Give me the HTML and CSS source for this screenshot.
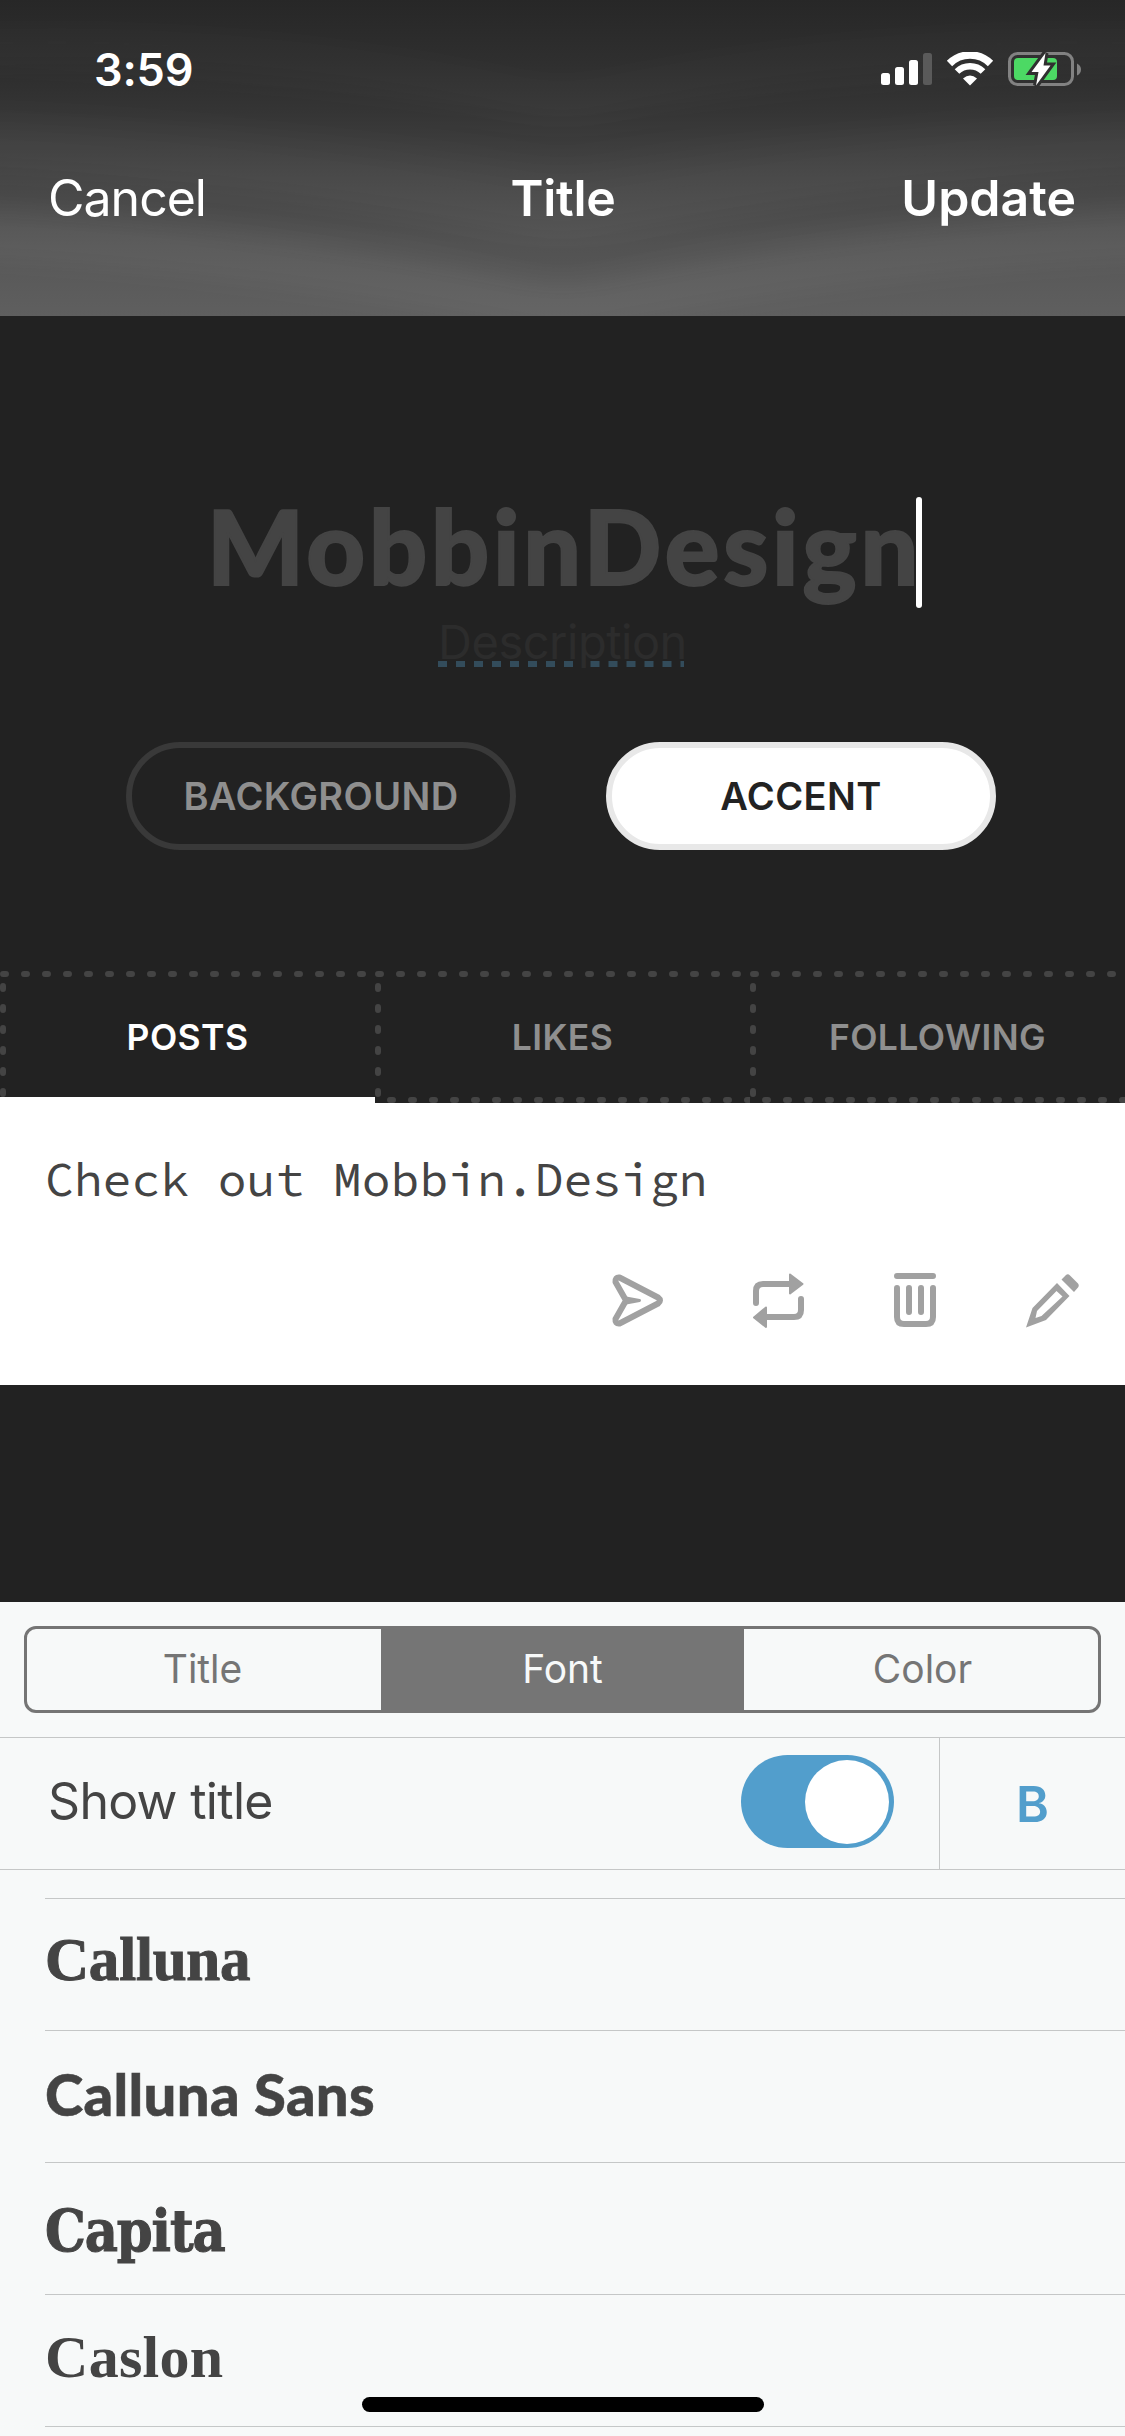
FILE: index.html
```html
<!DOCTYPE html>
<html lang="en">
<head>
<meta charset="utf-8">
<title>Title</title>
<link rel="stylesheet" href="styles.css">
</head>
<body>
<div class="screen">
  <header class="header">
    <svg class="header-bg" viewBox="0 0 1125 316" preserveAspectRatio="none" aria-hidden="true">
      <defs>
        <linearGradient id="hg" x1="0" y1="0" x2="0" y2="1">
          <stop offset="0" stop-color="#272727"/><stop offset=".2" stop-color="#2f2f2f"/>
          <stop offset=".36" stop-color="#383838"/><stop offset=".55" stop-color="#474747"/>
          <stop offset=".78" stop-color="#565656"/><stop offset="1" stop-color="#5f5f5f"/>
        </linearGradient>
        <filter id="soft" x="-20%" y="-50%" width="140%" height="200%" color-interpolation-filters="sRGB"><feGaussianBlur stdDeviation="30 12"/></filter>
      </defs>
      <rect width="1125" height="316" fill="url(#hg)"/>
      <g fill="none" filter="url(#soft)">
        <path d="M-60 45Q250 30 562 100Q875 30 1185 45" stroke="#fff" stroke-opacity=".015" stroke-width="36"/>
        <path d="M-60 85Q300 100 562 145Q825 100 1185 85" stroke="#000" stroke-opacity=".07" stroke-width="26"/>
        <path d="M-60 145Q250 160 562 215Q875 160 1185 145" stroke="#fff" stroke-opacity=".015" stroke-width="46"/>
        <path d="M-60 180Q300 200 562 262Q825 200 1185 180" stroke="#000" stroke-opacity=".05" stroke-width="28"/>
        <path d="M-60 235Q260 250 562 312Q865 250 1185 235" stroke="#fff" stroke-opacity=".045" stroke-width="44"/>
      </g>
    </svg>
    <div class="status">
      <span class="time">3:59</span>
      <svg class="status-icons" width="204" height="36" viewBox="0 0 204 36" aria-hidden="true">
        <g fill="#fff">
          <rect x="1" y="21" width="9" height="12" rx="2.5"/>
          <rect x="15" y="15" width="9" height="18" rx="2.5"/>
          <rect x="29" y="8" width="9" height="25" rx="2.5"/>
          <rect x="43" y="1" width="9" height="32" rx="2.5" fill="#5a5a5a"/>
        </g>
        <g fill="none" stroke="#fff">
          <path d="M69.500 11.500A29 29 0 0 1 110.500 11.500" stroke-width="7.500"/>
          <path d="M77 19.500A18.500 18.500 0 0 1 103 19.500" stroke-width="6.500"/>
        </g>
        <path d="M83 26.500Q90 20.500 97 26.500L90 33.500Z" fill="#fff"/>
        <rect x="129.500" y="1.500" width="63" height="31" rx="8" fill="none" stroke="#828282" stroke-width="3"/>
        <path d="M197 11.500Q201 13.500 201 17.500T197 23.500Z" fill="#828282"/>
        <rect x="134" y="6" width="43" height="22" rx="4" fill="#4cd964"/>
        <path d="M165.500 1L151.500 20H158.500L156 33.500L170.500 13.500H163.500Z" fill="#fff" stroke="#303030" stroke-width="6" paint-order="stroke"/>
      </svg>
    </div>
    <nav class="nav">
      <span class="nav-cancel">Cancel</span>
      <span class="nav-title">Title</span>
      <span class="nav-update">Update</span>
    </nav>
  </header>

  <main class="preview">
    <div class="blog-title"><span class="blog-name">MobbinDesign</span><i class="caret"></i></div>
    <div class="description"><span>Description</span>
      <svg class="dots" width="246" height="6" viewBox="0 0 246 6" aria-hidden="true"><path d="M0 3H137M152.500 3H246" stroke="#334c5b" stroke-width="6" stroke-dasharray="9 9"/></svg>
    </div>
    <div class="pills">
      <div class="pill">BACKGROUND</div>
      <div class="pill pill-on">ACCENT</div>
    </div>
    <div class="tabs">
      <div class="tab tab-on">POSTS
        <svg class="tab-edge" width="375" height="132" viewBox="0 0 375 132"><path d="M3 3H375M3 15V126"/></svg></div>
      <div class="tab">LIKES
        <svg class="tab-edge" width="375" height="132" viewBox="0 0 375 132"><path d="M3 3H375M3 15V132M15 129H375"/></svg></div>
      <div class="tab">FOLLOWING
        <svg class="tab-edge" width="375" height="132" viewBox="0 0 375 132"><path d="M3 3H375M3 15V132M15 129H375"/></svg></div>
    </div>
    <article class="post">
      <p class="post-text">Check out Mobbin.Design</p>
      <div class="actions">
        <svg width="51" height="56" viewBox="0 0 51 56" fill="none" stroke="#a1a1a1" stroke-width="6" stroke-linejoin="round" stroke-linecap="round"><path d="M7.500 4.500L46 24.500Q50 27.500 46 30.500L7.500 50.500Q3 51 3.500 46L14 27.500L3.500 9Q3 4 7.500 4.500Z"/><path d="M14 25L27.500 27.500L14 30Z" fill="#a1a1a1" stroke-width="3"/></svg>
        <svg width="53" height="56" viewBox="0 0 53 56" fill="none" stroke="#a1a1a1" stroke-width="6" stroke-linecap="round"><path d="M4 30V18Q4 11 11 11H38M49 26V37Q49 44 42 44H15"/><path d="M38 1.500L50.500 11L38 20.500ZM14 34.500L2 44.500L14 54Z" fill="#a1a1a1" stroke-width="2" stroke-linejoin="round"/></svg>
        <svg class="trash" width="42" height="56" viewBox="0 0 42 56" fill="none" stroke="#a1a1a1" stroke-width="6" stroke-linecap="round"><path d="M3 3H39M3 15V44Q3 51 10 51H32Q39 51 39 44V15M15 15V39M27 15V39"/></svg>
        <svg width="53" height="56" viewBox="0 0 53 56"><path fill="#a1a1a1" fill-rule="evenodd" d="M31 10L43.500 23L20 47L0 54.500L6.500 35ZM30.500 18L11 38L9.500 45L15.500 43L36.500 23.500ZM35.500 6.500L40 2Q42 .5 44 2.500L52 10.500Q53.500 12.500 52 14.500L48 19Z"/></svg>
      </div>
    </article>
  </main>

  <section class="panel">
    <div class="segments">
      <div class="segment segment-first">Title</div>
      <div class="segment segment-on">Font</div>
      <div class="segment segment-last">Color</div>
    </div>
    <div class="setting">
      <span class="setting-label">Show title</span>
      <div class="toggle"><i class="knob"></i></div>
      <div class="bold-button">B</div>
    </div>
    <div class="fonts">
      <div class="font-row calluna"><span>Calluna</span></div>
      <div class="font-row calluna-sans"><span>Calluna Sans</span></div>
      <div class="font-row capita"><span>Capita</span></div>
      <div class="font-row caslon"><span>Caslon</span></div>
    </div>
  </section>
  <div class="home-bar"></div>
</div>
</body>
</html>
```
FILE: styles.css
```css
* { box-sizing: border-box; }
body { margin: 0; font-family: Inter, "Liberation Sans", sans-serif; }
.screen { position: relative; width: 1125px; height: 2436px; overflow: hidden; background: #222; }

.header { position: relative; height: 316px; color: #fff; }
.header-bg { position: absolute; inset: 0; width: 100%; height: 100%; }
.status { position: relative; display: flex; justify-content: space-between; align-items: center; height: 139px; padding: 0 41px 0 94px; }
.time { font-size: 45px; font-weight: 600; letter-spacing: -0.2px; }
.status-icons { display: block; }
.nav { position: relative; display: grid; grid-template-columns: 1fr 1fr 1fr; align-items: center; height: 118px; padding: 0 49px 0 48px; font-size: 50px; line-height: 60px; }
.nav-cancel { letter-spacing: -1px; }
.nav-title { padding-left: 2px; text-align: center; font-weight: 600; letter-spacing: -0.3px; }
.nav-update { text-align: right; font-weight: 600; letter-spacing: 0; }

.preview { height: 1286px; padding-top: 181px; background: #222; }
.blog-title { display: flex; justify-content: center; align-items: flex-start; height: 111px; padding-left: 4px; }
.blog-name { margin-top: -7px; font: 900 102px/111px Lato, sans-serif; letter-spacing: 3.8px; color: #444; -webkit-text-stroke: 2px #444; }
.caret { width: 6px; height: 111px; margin-left: -6px; border-radius: 3px; background: #fff; }
.description { position: relative; display: flex; justify-content: center; height: 134px; padding-top: 4px; font-size: 47px; line-height: 60px; letter-spacing: -0.5px; color: #2c2c2c; }
.dots { position: absolute; left: 438px; top: 53px; }
.pills { display: flex; justify-content: center; gap: 90px; height: 108px; padding-right: 3px; }
.pill { display: flex; align-items: center; justify-content: center; width: 390px; height: 108px; border: 6px solid #393939; border-radius: 54px; font-size: 38px; font-weight: 600; letter-spacing: 0.4px; color: #8f8f8f; }
.pill-on { border-color: #e8e8e8; background: #fff; color: #222; }
.tabs { display: flex; margin-top: 121px; height: 132px; background: linear-gradient(#fff, #fff) 0 100% / 375px 6px no-repeat; }
.tab { position: relative; display: flex; align-items: center; justify-content: center; width: 375px; font-size: 35.500px; font-weight: 600; letter-spacing: 0.4px; color: #8f8f8f; }
.tab-on { color: #fff; }
.tab-edge { position: absolute; inset: 0; fill: none; stroke: #444; stroke-width: 6; stroke-linecap: round; stroke-dasharray: 3 18; }
.post { height: 282px; padding: 46px 46px 0 45px; background: #fff; }
.post-text { margin: 0; height: 124px; font: 48px/60px "Source Code Pro", "Noto Sans Mono CJK JP", "DejaVu Sans Mono", monospace; color: #444; }
.actions { display: flex; justify-content: flex-end; gap: 89px; height: 56px; }
.trash { margin-right: 1px; }

.panel { height: 834px; padding-top: 24px; background: #f7f9f9; }
.segments { display: flex; height: 87px; margin: 0 24px; border: 3px solid #757575; border-radius: 12px; overflow: hidden; }
.segment { display: flex; flex: 1; align-items: center; justify-content: center; padding-bottom: 2px; font-size: 39px; color: #757575; }
.segment-first { padding-right: 3px; }
.segment-last { padding-left: 3px; }
.segment-on { flex: 0 0 363px; background: #757575; color: #f7f9f9; }
.setting { display: flex; align-items: center; height: 133px; margin-top: 24px; padding-left: 48px; border-top: 1px solid #c5c7c7; border-bottom: 1px solid #c5c7c7; }
.setting-label { flex: 1; padding-bottom: 5px; font-size: 50px; line-height: 60px; letter-spacing: -0.7px; color: #444; }
.toggle { display: flex; justify-content: flex-end; width: 153px; height: 93px; margin: 0 45px 4px 0; padding: 5px; border-radius: 47px; background: #529ecc; }
.knob { width: 84px; height: 84px; border-radius: 50%; background: #fff; }
.bold-button { display: flex; align-items: center; justify-content: center; width: 186px; height: 131px; border-left: 1px solid #c5c7c7; font-size: 50px; font-weight: 600; color: #529ecc; }
.fonts { margin: 28px 0 0 45px; border-top: 1px solid #c5c7c7; }
.font-row { height: 132px; padding-top: 30px; border-bottom: 1px solid #c5c7c7; line-height: 64px; font-size: 58px; font-weight: 700; color: #444; }
.calluna { padding-top: 29px; font-family: "Liberation Serif", serif; font-size: 61px; letter-spacing: -0.2px; -webkit-text-stroke: 1px #444; }
.calluna-sans { padding-top: 31px; font-family: Lato, sans-serif; font-weight: 900; letter-spacing: 0.3px; -webkit-text-stroke: 0.5px #444; }
.capita { padding-top: 36px; font-family: "DejaVu Serif Condensed", "DejaVu Serif", serif; font-stretch: condensed; font-size: 57px; letter-spacing: -1.1px; -webkit-text-stroke: 1px #444; }
.caslon { font-family: "Liberation Serif", serif; font-size: 60px; letter-spacing: 0.3px; }
.home-bar { position: absolute; left: 362px; top: 2397px; width: 402px; height: 15px; border-radius: 8px; background: #000; }
```
